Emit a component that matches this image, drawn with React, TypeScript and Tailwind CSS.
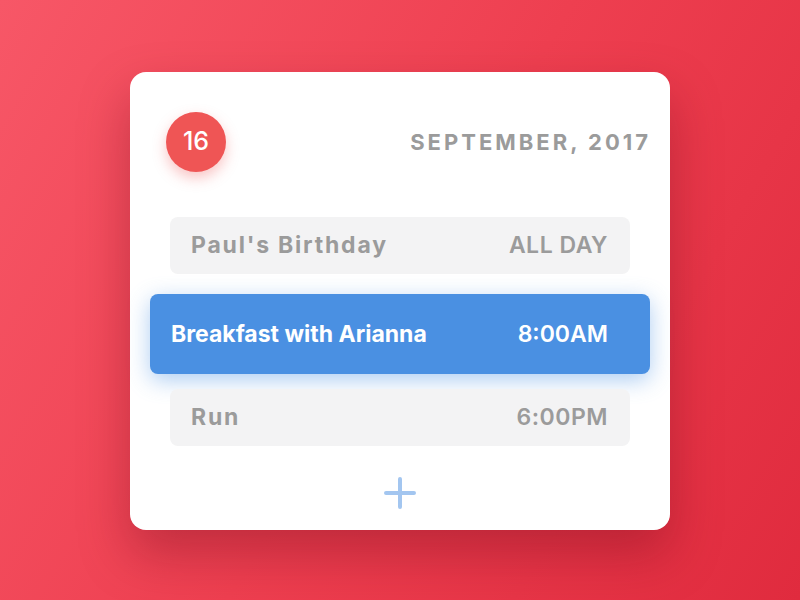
import React from 'react';

interface CalEvent {
  title: string;
  time: string;
  active?: boolean;
}

const events: CalEvent[] = [
  { title: "Paul's Birthday", time: 'ALL DAY' },
  { title: 'Breakfast with Arianna', time: '8:00AM', active: true },
  { title: 'Run', time: '6:00PM' },
];

const font = { fontFamily: 'Inter, "Open Sans", sans-serif' };

const EventRow: React.FC<{ event: CalEvent }> = ({ event }) => {
  if (event.active) {
    return (
      <div className="mx-[-20px] h-[80px] flex items-center justify-between pl-[21px] pr-[42px] bg-[#4a90e2] rounded-[8px] shadow-[0_6px_22px_rgba(74,144,226,0.45)] text-white">
        <span className="text-[23px] font-bold">{event.title}</span>
        <span className="text-[23px] font-semibold">{event.time}</span>
      </div>
    );
  }
  return (
    <div className="h-[57px] flex items-center justify-between pl-[21px] pr-[22px] bg-[#f3f3f4] rounded-[8px] text-[#9b9b9b]">
      <span className="text-[23px] font-bold tracking-[1.8px]">{event.title}</span>
      <span className="text-[23px] font-semibold tracking-[0.5px]">{event.time}</span>
    </div>
  );
};

export default function App() {
  return (
    <div
      className="w-[800px] h-[600px] flex items-start justify-center pt-[72px] bg-[linear-gradient(120deg,#f75767_0%,#ee3f50_50%,#e02b3e_100%)]"
      style={font}
    >
      <div className="w-[540px] h-[458px] bg-white rounded-[16px] shadow-[0_24px_50px_rgba(110,10,25,0.35)] pt-[40px] px-[40px] flex flex-col">
        <div className="flex items-center justify-between ml-[-4px] mr-[-21px]">
          <div className="w-[60px] h-[60px] rounded-full bg-[#ef5555] flex items-center justify-center text-white text-[25px] font-medium shadow-[0_6px_14px_rgba(239,85,85,0.35)]">
            16
          </div>
          <div className="text-[22px] font-bold tracking-[3px] text-[#9b9b9b]">SEPTEMBER, 2017</div>
        </div>
        <div className="mt-[45px] flex flex-col">
          <EventRow event={events[0]} />
          <div className="mt-[20px]">
            <EventRow event={events[1]} />
          </div>
          <div className="mt-[15px]">
            <EventRow event={events[2]} />
          </div>
        </div>
        <div className="flex justify-center mt-[31px]">
          <svg width="32" height="32" viewBox="0 0 32 32">
            <path d="M16 2v28M2 16h28" stroke="#a3c6f0" strokeWidth="4" strokeLinecap="round" />
          </svg>
        </div>
      </div>
    </div>
  );
}
